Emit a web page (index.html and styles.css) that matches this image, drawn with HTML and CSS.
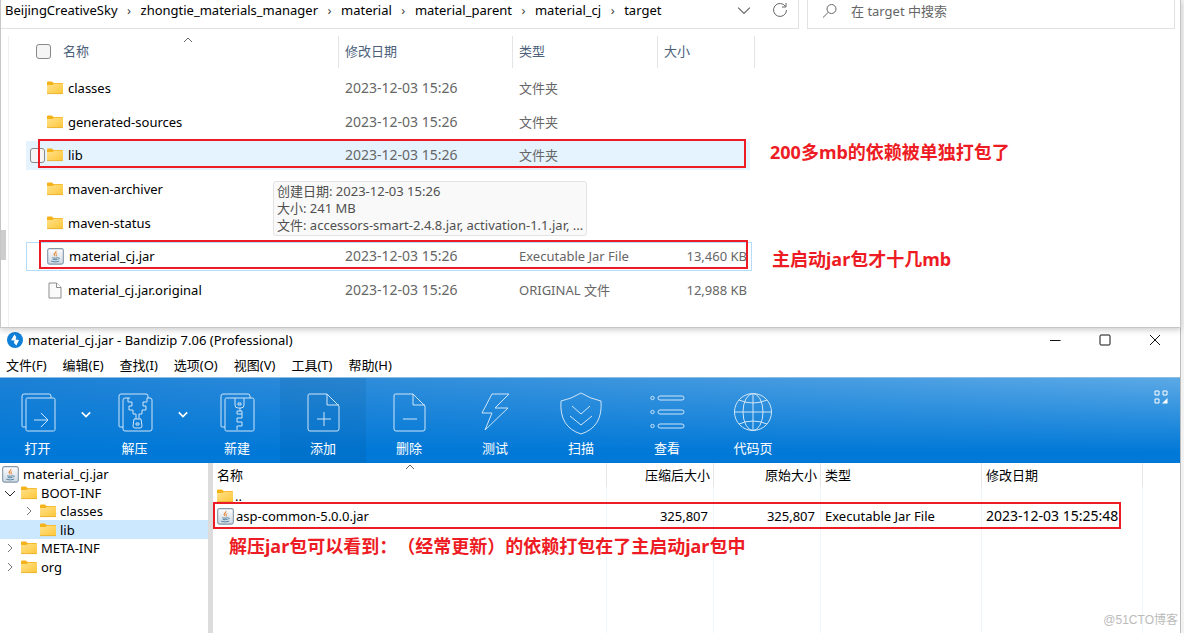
FILE: index.html
```html
<!DOCTYPE html>
<html lang="zh-CN">
<head>
<meta charset="utf-8">
<title>target</title>
<link rel="stylesheet" href="styles.css">
</head>
<body>
<svg class="defs" aria-hidden="true">
  <defs>
    <linearGradient id="gold" x1="0" y1="0" x2="1" y2="1"><stop offset="0" stop-color="#ffe18a"/><stop offset="1" stop-color="#fdc638"/></linearGradient>
    <linearGradient id="steel" x1="0" y1="0" x2="0" y2="1"><stop offset="0" stop-color="#fdfdfe"/><stop offset="1" stop-color="#ccd8e2"/></linearGradient>
  </defs>
  <symbol id="folder" viewBox="0 0 16 14"><path d="M0 1.5Q0 .5 1 .5H5L6.5 2H15Q16 2 16 3V6H0Z" fill="#f5b21a"/><path d="M0 4H5.5L7 2.8H15.2Q16 2.8 16 3.6V12Q16 13 15 13H1Q0 13 0 12Z" fill="url(#gold)"/><path d="M0 12.6H16" stroke="#e9ac2b" stroke-width=".8"/></symbol>
  <symbol id="jar" viewBox="0 0 18 18"><rect x=".7" y=".7" width="16.6" height="16.4" rx="2" fill="url(#steel)" stroke="#8799aa" stroke-width="1.2"/><path d="M9.500 2.500Q11 4.300 8.800 5.700 7.300 6.900 8.900 9.200 5.900 7.300 7.500 5.500 9.500 4 9.500 2.500ZM11.500 5.200Q9.400 6.300 10.300 7.500 10.800 8.500 9.300 9.500 9.700 8.400 9.100 7.600 8.500 6 11.500 5.200Z" fill="#e9812c"/><path d="M5.500 10.300Q8.500 11.400 11.600 10.300M6 12Q8.500 13 11 12M4.500 14Q8.500 15.500 12.800 14M12 10.300Q14.300 10.300 11.800 12.200" fill="none" stroke="#5382a1"/></symbol>
  <symbol id="doc" viewBox="0 0 14 17"><path d="M1 1H8.500L13 5.500V16H1Z" fill="#fafafa" stroke="#8d8d8d"/><path d="M8.500 1V5.500H13" fill="#fff" stroke="#8d8d8d"/></symbol>
  <symbol id="chev-r" viewBox="0 0 12 12"><path d="M4 2 8 6 4 10"/></symbol>
  <symbol id="chev-d" viewBox="0 0 12 12"><path d="M1 4 6 9 11 4"/></symbol>
  <symbol id="chev-u" viewBox="0 0 12 6"><path d="M2 5 6 1 10 5"/></symbol>
</svg>

<section class="explorer">
  <header class="bar">
    <nav class="address">
      <ol class="crumbs">
        <li><a href="#">BeijingCreativeSky</a></li>
        <li><a href="#">zhongtie_materials_manager</a></li>
        <li><a href="#">material</a></li>
        <li><a href="#">material_parent</a></li>
        <li><a href="#">material_cj</a></li>
        <li><a href="#">target</a></li>
      </ol>
      <button class="tool" aria-label="展开"><svg class="line" width="14" height="14"><use href="#chev-d"/></svg></button>
      <button class="tool" aria-label="刷新"><svg class="line" width="16" height="16" viewBox="0 0 16 16"><path d="M13.500 4.500A6.500 6.500 0 1 0 14.500 8M14 1V5H10"/></svg></button>
    </nav>
    <label class="search">
      <svg class="line" width="16" height="16" viewBox="0 0 16 16"><circle cx="9.500" cy="6" r="4.500"/><path d="M6.300 9.300 1 14.500"/></svg>
      <input type="text" placeholder="在 target 中搜索" aria-label="在 target 中搜索">
    </label>
  </header>
  <div class="files">
    <div class="scrollbar"><i></i></div>
    <div class="listing">
      <table class="grid">
        <colgroup><col class="c-name"><col class="c-date"><col class="c-type"><col class="c-size"></colgroup>
        <thead><tr>
          <th><svg class="sort line" width="12" height="6"><use href="#chev-u"/></svg><div class="head"><input type="checkbox" class="tick" aria-label="全选">名称</div></th>
          <th>修改日期</th><th>类型</th><th>大小</th>
        </tr></thead>
        <tbody>
          <tr><td><div class="file"><svg width="16" height="14"><use href="#folder"/></svg>classes</div></td><td class="date">2023-12-03 15:26</td><td>文件夹</td><td></td></tr>
          <tr><td><div class="file"><svg width="16" height="14"><use href="#folder"/></svg>generated-sources</div></td><td class="date">2023-12-03 15:26</td><td>文件夹</td><td></td></tr>
          <tr class="hover"><td><div class="file"><input type="checkbox" class="tick" aria-label="lib"><svg width="16" height="14"><use href="#folder"/></svg>lib</div></td><td class="date">2023-12-03 15:26</td><td>文件夹</td><td></td></tr>
          <tr><td><div class="file"><svg width="16" height="14"><use href="#folder"/></svg>maven-archiver</div></td><td></td><td></td><td></td></tr>
          <tr><td><div class="file"><svg width="16" height="14"><use href="#folder"/></svg>maven-status</div></td><td></td><td></td><td></td></tr>
          <tr class="focus"><td><div class="file"><svg width="17" height="17"><use href="#jar"/></svg>material_cj.jar</div></td><td class="date">2023-12-03 15:26</td><td>Executable Jar File</td><td>13,460 KB</td></tr>
          <tr><td><div class="file"><svg width="16" height="17"><use href="#doc"/></svg>material_cj.jar.original</div></td><td class="date">2023-12-03 15:26</td><td>ORIGINAL 文件</td><td>12,988 KB</td></tr>
        </tbody>
      </table>
    </div>
  </div>
  <div class="tip" role="tooltip">创建日期: 2023-12-03 15:26<br>大小: 241 MB<br>文件: accessors-smart-2.4.8.jar, activation-1.1.jar, ...</div>
  <div class="mark mark-lib"></div>
  <div class="mark mark-jar"></div>
  <p class="note note-lib">200多mb的依赖被单独打包了</p>
  <p class="note note-jar">主启动jar包才十几mb</p>
</section>

<section class="zip">
  <header class="title">
    <svg width="16" height="16" viewBox="0 0 16 16"><circle cx="8" cy="8" r="8" fill="#0f7fd8"/><path d="M7.500 2.500 4 8.200 7.600 8.600 6.800 10.800 9.400 13.500 12 8 8.600 7.400 9.300 5.200Z" fill="#fff"/></svg>
    <h1>material_cj.jar - Bandizip 7.06 (Professional)</h1>
    <button aria-label="最小化"><svg width="12" height="12" viewBox="0 0 12 12"><path d="M1 6.500H11.500"/></svg></button>
    <button aria-label="最大化"><svg width="12" height="12" viewBox="0 0 12 12"><rect x="1" y="1" width="10" height="10" rx="1"/></svg></button>
    <button aria-label="关闭"><svg width="12" height="12" viewBox="0 0 12 12"><path d="M1 1 11 11M11 1 1 11"/></svg></button>
  </header>
  <nav class="menu">
    <button>文件(F)</button><button>编辑(E)</button><button>查找(I)</button><button>选项(O)</button><button>视图(V)</button><button>工具(T)</button><button>帮助(H)</button>
  </nav>
  <div class="ribbon">
    <button class="cmd split"><svg width="44" height="44" viewBox="0 0 44 44"><path d="M10 36H7Q6 36 6 35V5Q6 3 8 3H33Q35 3 35 5V7"/><rect x="10" y="7" width="29" height="33" rx="1.500"/><path d="M18 29H31M25 22 32 29 25 36"/></svg>打开</button>
    <button class="drop" aria-label="打开选项"><svg width="10" height="10"><use href="#chev-d"/></svg></button>
    <button class="cmd split"><svg width="44" height="44" viewBox="0 0 44 44"><path d="M10 36H7Q6 36 6 35V5Q6 3 8 3H33Q35 3 35 5V7"/><path d="M17 7H12Q10 7 10 9V38Q10 40 12 40H37Q39 40 39 38V9Q39 7 37 7H34M15 7V11H19V15H16V19H20V23H23V28M34 7V11H30V15H33V19H29V23H26V28M21 28H28L29 35Q29 37 27 37H22Q20 37 20 35ZM23 32H26V34H23Z"/></svg>解压</button>
    <button class="drop" aria-label="解压选项"><svg width="10" height="10"><use href="#chev-d"/></svg></button>
    <button class="cmd"><svg width="44" height="44" viewBox="0 0 44 44"><path d="M10 36H7Q6 36 6 35V5Q6 3 8 3H33Q35 3 35 5V7"/><rect x="10" y="7" width="29" height="33" rx="1.500"/><path d="M20 7V14Q20 17 23 17H26Q29 17 29 14V7M23 12H26V14H23ZM25 17V20H22V23H27V27H22V31H27V35H22V39M25 20H27V23"/></svg>新建</button>
    <button class="cmd active"><svg width="44" height="44" viewBox="0 0 44 44"><path d="M8 3H26L38 15V38Q38 40 36 40H9Q7 40 7 38V5Q7 3 8 3ZM26 3V14H38M16 28H30M23 21V35"/></svg>添加</button>
    <button class="cmd"><svg width="44" height="44" viewBox="0 0 44 44"><path d="M8 3H26L38 15V38Q38 40 36 40H9Q7 40 7 38V5Q7 3 8 3ZM26 3V14H38M16 28H30"/></svg>删除</button>
    <button class="cmd"><svg width="44" height="44" viewBox="0 0 44 44"><path d="M19 3H36L22 17H35L12 39 19 22H9Z"/></svg>测试</button>
    <button class="cmd"><svg width="44" height="44" viewBox="0 0 44 44"><path d="M22 2Q32 8 42 10 44 36 22 43 0 36 2 10 12 8 22 2ZM13 15 22 23 31 15M11 25 22 34 33 25"/></svg>扫描</button>
    <button class="cmd"><svg width="44" height="44" viewBox="0 0 44 44"><circle cx="7.500" cy="7" r="1.700"/><rect x="13" y="5" width="26" height="4" rx="2"/><circle cx="7.500" cy="21" r="1.700"/><rect x="13" y="19" width="26" height="4" rx="2"/><circle cx="7.500" cy="35" r="1.700"/><rect x="13" y="33" width="26" height="4" rx="2"/></svg>查看</button>
    <button class="cmd"><svg width="44" height="44" viewBox="0 0 44 44"><circle cx="22" cy="21" r="18.500"/><ellipse cx="22" cy="21" rx="10" ry="18.500"/><path d="M22 2.500V39.500M3.500 21H40.500M8 9Q22 15 36 9M8 33Q22 27 36 33"/></svg>代码页</button>
    <button class="layout" aria-label="布局"><svg width="14" height="14" viewBox="0 0 14 14"><path d="M1 1H5V5H1ZM9 1H13V5H9ZM1 9H5V13H1Z"/><path class="solid" d="M13.500 8V13.500H8Z"/></svg></button>
  </div>
  <div class="panes">
    <ul class="tree">
      <li><svg width="17" height="17"><use href="#jar"/></svg>material_cj.jar</li>
      <li class="l1"><svg class="arrow open" width="12" height="12"><use href="#chev-d"/></svg><svg width="16" height="14"><use href="#folder"/></svg>BOOT-INF</li>
      <li class="l2"><svg class="arrow" width="12" height="12"><use href="#chev-r"/></svg><svg width="16" height="14"><use href="#folder"/></svg>classes</li>
      <li class="l2 leaf current"><svg width="16" height="14"><use href="#folder"/></svg>lib</li>
      <li class="l1"><svg class="arrow" width="12" height="12"><use href="#chev-r"/></svg><svg width="16" height="14"><use href="#folder"/></svg>META-INF</li>
      <li class="l1"><svg class="arrow" width="12" height="12"><use href="#chev-r"/></svg><svg width="16" height="14"><use href="#folder"/></svg>org</li>
    </ul>
    <div class="contents">
      <table class="entries">
        <colgroup><col class="e-name"><col class="e-num"><col class="e-num"><col class="e-wide"><col class="e-wide"><col></colgroup>
        <thead><tr><th><svg class="sort line" width="12" height="6"><use href="#chev-u"/></svg>名称</th><th class="num">压缩后大小</th><th class="num">原始大小</th><th>类型</th><th>修改日期</th><th></th></tr></thead>
        <tbody>
          <tr class="up"><td><div class="entry"><svg width="16" height="14"><use href="#folder"/></svg>..</div></td><td></td><td></td><td></td><td></td><td></td></tr>
          <tr><td><div class="entry"><svg width="17" height="17"><use href="#jar"/></svg>asp-common-5.0.0.jar</div></td><td class="num">325,807</td><td class="num">325,807</td><td>Executable Jar File</td><td class="date">2023-12-03 15:25:48</td><td></td></tr>
          <tr class="rest"><td></td><td></td><td></td><td></td><td></td><td></td></tr>
        </tbody>
      </table>
      <div class="mark mark-entry"></div>
      <p class="note note-entry">解压jar包可以看到：（经常更新）的依赖打包在了主启动jar包中</p>
    </div>
  </div>
</section>
<span class="watermark">@51CTO博客</span>
</body>
</html>
```

FILE: styles.css
```css
* { box-sizing: border-box; }
body {
  margin: 0;
  min-height: 100vh;
  display: flex;
  flex-direction: column;
  position: relative;
  background: #f3f3f3;
  color: #000;
  font: 13px/18px "Noto Sans", "Noto Sans CJK SC", sans-serif;
}
button, input { font: inherit; color: inherit; margin: 0; }
button { border: 0; padding: 0; background: none; }
svg { flex: none; }
.defs { position: absolute; width: 0; height: 0; }
.line { fill: none; stroke: #666; }
table { border-collapse: separate; border-spacing: 0; table-layout: fixed; }
th { font-weight: 400; text-align: left; }
th, td { padding: 0; white-space: nowrap; }

/* File explorer window */
.explorer {
  position: relative;
  z-index: 1;
  margin-right: 3px;
  height: 328px;
  display: flex;
  flex-direction: column;
  background: #fff;
  border: solid #c6c6c6;
  border-width: 0 1px 1px;
  box-shadow: 0 2px 6px #0003;
}
.bar { display: flex; gap: 8px; padding-right: 5px; height: 29px; }
.address {
  flex: 1;
  display: flex;
  align-items: center;
  padding: 0 0 8px 4px;
  border: solid #e2e2e2;
  border-width: 0 1px 1px 0;
}
.crumbs { flex: 1; display: flex; margin: 0; padding: 0; list-style: none; }
.crumbs a { color: #000; text-decoration: none; }
.crumbs li + li::before { content: "›"; display: inline-block; width: 23px; text-align: center; color: #444; }
.tool { display: flex; justify-content: center; width: 36px; }
.search {
  width: 368px;
  display: flex;
  align-items: center;
  gap: 13px;
  padding: 0 14px 7px;
  border: solid #e2e2e2;
  border-width: 0 1px 1px;
}
.search input { flex: 1; min-width: 0; padding: 0; border: 0; outline: 0; background: none; }
.search input::placeholder { color: #666; opacity: 1; }
.files { flex: 1; display: flex; padding-top: 7px; }
.scrollbar { width: 7px; }
.scrollbar i { display: block; width: 5px; height: 30px; margin-top: 194px; background: #cdcdcd; }
.listing { flex: 1; padding-left: 17px; border-left: 1px solid #f0f0f0; }
.grid { width: 729px; }
.c-name { width: 313px; }
.c-date { width: 174px; }
.c-type { width: 145px; }
.c-size { width: 97px; }
.grid th { position: relative; height: 32px; padding: 0 0 2px 6px; border-right: 1px solid #e4e4e4; color: #4c607a; }
.grid th:first-child { padding-left: 10px; }
.head { display: flex; align-items: center; gap: 12px; }
.sort { position: absolute; top: 1px; left: 50%; }
.grid tbody::before { content: ""; display: block; height: 3px; }
.grid td { height: 34px; padding-left: 6px; color: #666; }
.grid tr:nth-child(3n+2) td { height: 33px; }
.grid td:first-child { padding-left: 4px; color: #000; }
.grid td:last-child { padding-right: 8px; text-align: right; }
.date, .grid .date { font-size: 14px; }
.file { position: relative; z-index: 1; display: flex; align-items: center; gap: 5px; padding-left: 17px; }
.tick { appearance: none; flex: none; width: 15px; height: 15px; border: 1px solid #888; border-radius: 3px; background: #f5f5f5; }
.file .tick { position: absolute; left: 0; }
.hover td, .focus td { position: relative; z-index: 1; }
.hover td:first-child, .focus td:first-child { z-index: 0; }
.hover td:first-child::before, .focus td:first-child::before {
  content: "";
  position: absolute;
  left: 0;
  top: 3px;
  bottom: 2px;
  width: 724px;
}
.hover td:first-child::before { background: #e5f3ff; }
.focus td:first-child::before { border: 1px solid #b5dcfa; }
.tip {
  position: absolute;
  left: 272px;
  top: 181px;
  padding: 1px 3px;
  border: 1px solid #e3e3e3;
  border-radius: 3px;
  background: #f9f9f9;
  color: #505050;
  line-height: 17px;
  white-space: nowrap;
  z-index: 2;
}

/* Hand-drawn highlights */
.mark { position: absolute; border: 2px solid #ed1c24; z-index: 3; }
.mark-lib { left: 37px; top: 139px; width: 708px; height: 29px; }
.mark-jar { left: 38px; top: 240px; width: 709px; height: 29px; }
.mark-entry { left: 0; top: 39px; width: 908px; height: 27px; }
.note { position: absolute; margin: 0; color: #ed1c24; font-size: 18px; font-weight: 700; line-height: 24px; white-space: nowrap; text-spacing-trim: space-all; }
.note-lib { left: 769px; top: 140px; }
.note-jar { left: 771px; top: 247px; }
.note-entry { left: 16px; top: 71px; }

/* Archive manager window */
.zip {
  flex: 1;
  display: flex;
  flex-direction: column;
  margin-right: 3px;
  background: #fff;
  border-right: 1px solid #bbb;
}
.title { display: flex; align-items: center; height: 24px; padding-left: 7px; }
.title h1 { flex: 1; margin: 0 0 0 5px; font-size: 13px; font-weight: 400; }
.title button { display: flex; justify-content: center; width: 50px; }
.title button svg { fill: none; stroke: #111; }
.menu { display: flex; gap: 16px; height: 25px; padding: 0 6px; align-items: center; }
.ribbon {
  display: flex;
  height: 86px;
  border-top: 1px solid #8ebde4;
  color: #fff;
  background: linear-gradient(to bottom, #0078d700, #0078d7 88%), linear-gradient(to right, #1b80d5, #5ba9e6);
}
.ribbon svg { fill: none; stroke: #cfe5f8; }
.cmd { width: 86px; display: flex; flex-direction: column; align-items: center; padding-top: 13px; gap: 4px; }
.split { width: 75px; }
.drop { width: 22px; padding: 27px 0 0; align-self: flex-start; }
.ribbon .drop svg { stroke: #fff; stroke-width: 2; }
.active { background: #00448020; }
.layout { margin: 12px 12px 0 auto; align-self: flex-start; }
.ribbon .layout svg { stroke: #fff; }
.ribbon .solid { fill: #fff; stroke: none; }
.panes { flex: 1; display: flex; }
.tree { width: 213px; margin: 0; padding: 2px 0 0; list-style: none; border-right: 5px solid #dcdcdc; }
.tree li { display: flex; align-items: center; gap: 4px; height: 18px; padding-left: 2px; }
.tree li:nth-child(even) { height: 19px; }
.tree .l1 { padding-left: 4px; }
.tree .l2 { padding-left: 23px; }
.tree .leaf { padding-left: 40px; }
.tree .current { background: #cce8ff; }
.arrow { fill: none; stroke: #777; margin-right: 1px; }
.open { stroke: #222; }
.contents { flex: 1; position: relative; display: flex; }
.entries { width: 100%; }
.e-name { width: 394px; }
.e-num { width: 107px; }
.e-wide { width: 161px; }
.entries th { position: relative; height: 24px; border-right: 1px solid #e6e6e6; }
.entries td { height: 22px; border-right: 1px solid #eef5fb; }
.entries th, .entries td { padding-left: 4px; }
.entries th:last-child, .entries td:last-child { border: 0; }
.entries .sort { margin-left: -6px; }
.entries .up td { height: 18px; }
.entries .rest td { height: auto; }
.entries .num { text-align: right; padding-right: 5px; }
.entries th.num { padding-right: 3px; }
.entry { display: flex; align-items: center; gap: 2px; }
.watermark { position: absolute; right: 6px; bottom: 4px; color: #bbb; font: 12px/18px "Liberation Sans", "Noto Sans CJK SC", sans-serif; }
```
